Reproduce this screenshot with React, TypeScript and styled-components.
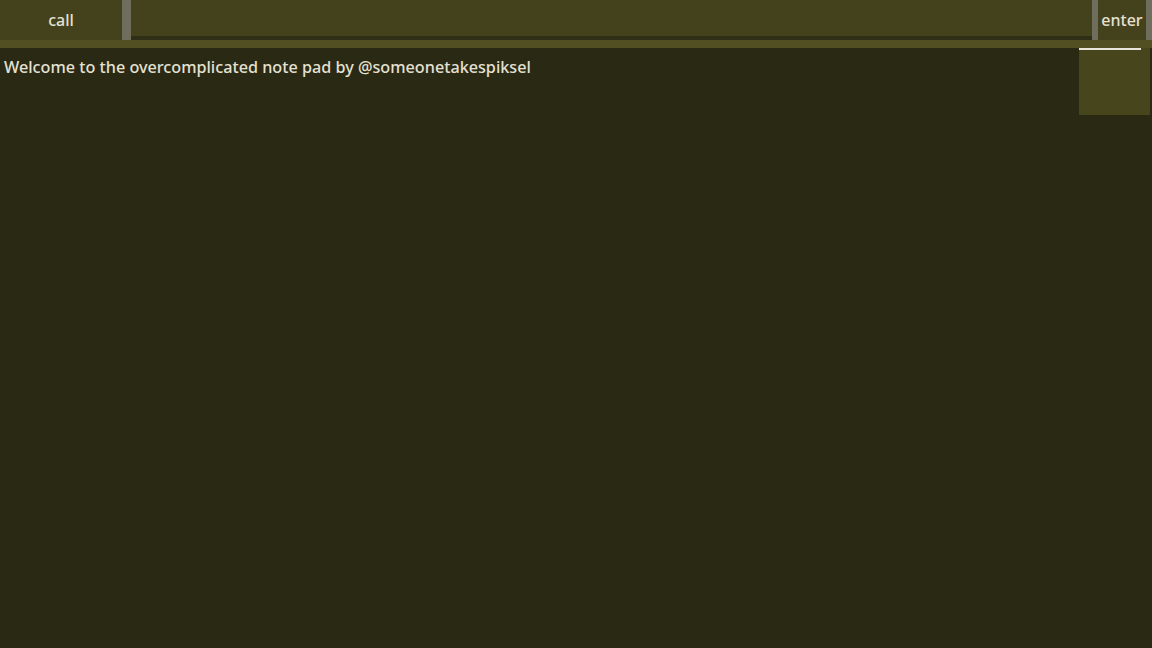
import React from 'react';
import styled, { createGlobalStyle } from 'styled-components';

const GlobalStyle = createGlobalStyle`
  html, body {
    margin: 0;
    padding: 0;
    background: #2a2914;
  }
  #root {
    height: 100vh;
  }
`;

const Page = styled.div`
  display: flex;
  flex-direction: column;
  height: 648px;
  width: 1152px;
  background: #2a2914;
  font-family: 'Noto Sans', 'Open Sans', sans-serif;
  color: #e4e1d2;
  overflow: hidden;
`;

const Toolbar = styled.div`
  display: flex;
  height: 40px;
  background: #44421d;
`;

const ToolButton = styled.div<{ $width: number }>`
  width: ${({ $width }) => $width}px;
  display: flex;
  align-items: center;
  justify-content: center;
  font-size: 16px;
  font-weight: 500;
  padding-bottom: 1px;
`;

const Divider = styled.div<{ $width: number }>`
  width: ${({ $width }) => $width}px;
  background: #6f6d5c;
`;

const Input = styled.div`
  flex: 1;
  border-bottom: 4px solid #2f2e17;
  background: #44421d;
`;

const Stripe = styled.div`
  height: 8px;
  background: #524f22;
`;

const Body = styled.div`
  flex: 1;
  display: flex;
  justify-content: space-between;
  align-items: flex-start;
`;

const Welcome = styled.div`
  padding: 8px 0 0 4px;
  font-size: 16.2px;
  font-weight: 500;
`;

const SidePanel = styled.div`
  position: relative;
  width: 71px;
  height: 67px;
  margin-right: 2px;
  background: #47451c;

  &::before {
    content: '';
    position: absolute;
    top: 0;
    left: 0;
    width: 62px;
    height: 2px;
    background: #e8e6da;
  }
`;

export default function App() {
  return (
    <>
      <GlobalStyle />
      <Page>
        <Toolbar>
          <ToolButton $width={122}>call</ToolButton>
          <Divider $width={9} />
          <Input />
          <Divider $width={6} />
          <ToolButton $width={48}>enter</ToolButton>
          <Divider $width={6} />
        </Toolbar>
        <Stripe />
        <Body>
          <Welcome>Welcome to the overcomplicated note pad by @someonetakespiksel</Welcome>
          <SidePanel />
        </Body>
      </Page>
    </>
  );
}
